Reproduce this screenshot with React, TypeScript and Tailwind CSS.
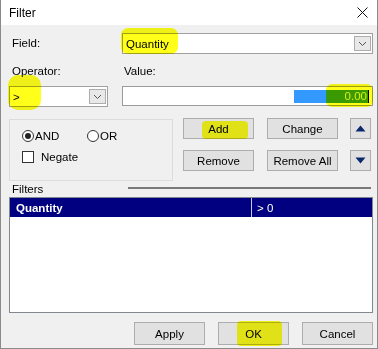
import React from 'react';

const font = { fontFamily: '"Liberation Sans", Arial, sans-serif' };

// Small chevron used in the combo boxes
const ComboArrow: React.FC = () => (
  <div className="w-[17px] h-[15px] border border-[#adadad] bg-[#e8e8e8] flex items-center justify-center">
    <svg width="9" height="6" viewBox="0 0 9 6">
      <path d="M1 1 L4.5 4.5 L8 1" fill="none" stroke="#555" strokeWidth="1" />
    </svg>
  </div>
);

const Combo: React.FC<{ value: string; width: string }> = ({ value, width }) => (
  <div className={`${width} h-[21px] bg-white border border-[#a0a0a0] flex items-center justify-between pl-[3px] pr-[1px]`}>
    <span>{value}</span>
    <ComboArrow />
  </div>
);

const WinButton: React.FC<{ label?: string; width?: string; children?: React.ReactNode }> = ({
  label,
  width = 'w-[71px]',
  children,
}) => (
  <div className={`${width} h-[21px] bg-[#e1e1e1] border border-[#adadad] flex items-center justify-center`}>
    {label ?? children}
  </div>
);

const Radio: React.FC<{ checked?: boolean; label: string }> = ({ checked, label }) => (
  <div className="flex items-center">
    <div className="w-[12px] h-[12px] rounded-full border border-[#333] bg-white flex items-center justify-center">
      {checked && <div className="w-[6px] h-[6px] rounded-full bg-[#222]" />}
    </div>
    <span className="ml-[1px]">{label}</span>
  </div>
);

export default function App() {
  return (
    <div
      className="relative w-[378px] h-[349px] bg-[#f0f0f0] border-l border-r border-b border-[#8a8a8a] text-[11.5px] leading-[14px] text-black overflow-hidden"
      style={font}
    >
      {/* Title bar */}
      <div className="h-[25px] bg-white flex items-center justify-between pl-[8px] pr-[8px]">
        <span className="text-[12px]">Filter</span>
        <svg width="11" height="11" viewBox="0 0 11 11" className="mr-[1px]">
          <path d="M0.5 0.5 L10.5 10.5 M10.5 0.5 L0.5 10.5" stroke="#111" strokeWidth="1" />
        </svg>
      </div>

      <div className="pl-[8px] flex flex-col">
        {/* Field */}
        <div className="flex items-start mt-[8px]">
          <div className="w-[113px] pl-[3px] pt-[3px]">Field:</div>
          <Combo value="Quantity" width="w-[251px]" />
        </div>

        {/* Operator / Value labels */}
        <div className="flex mt-[10px]">
          <div className="w-[113px] pl-[3px]">Operator:</div>
          <div className="pl-[2px]">Value:</div>
        </div>

        {/* Operator / Value inputs */}
        <div className="flex mt-[8px]">
          <Combo value=">" width="w-[99px]" />
          <div className="ml-[14px] w-[251px] h-[20px] bg-white border border-[#9a9a9a] flex items-center justify-end pr-[3px]">
            <div className="w-[34px] h-[13px] bg-[#3399ff]" />
            <div className="w-[40px] h-[13px] bg-[#3b9a06] flex items-center justify-end text-[#dcef5a] pr-[1px]">
              0.00
            </div>
            <div className="w-[1px] h-[13px] bg-black" />
          </div>
        </div>

        {/* Logic group + action buttons */}
        <div className="flex items-start mt-[11px]">
          <div className="w-[164px] h-[62px] mt-[1px] border border-[#dcdcdc] pl-[12px] pt-[9px]">
            <div className="flex">
              <div className="w-[65px]">
                <Radio checked label="AND" />
              </div>
              <Radio label="OR" />
            </div>
            <div className="flex items-center mt-[7px]">
              <div className="w-[12px] h-[12px] border border-[#333] bg-white" />
              <span className="ml-[7px]">Negate</span>
            </div>
          </div>
          <div className="ml-[10px] flex flex-col gap-[11px]">
            <div className="flex">
              <WinButton label="Add" />
              <div className="ml-[13px]">
                <WinButton label="Change" />
              </div>
              <div className="ml-[12px]">
                <WinButton width="w-[21px]">
                  <svg width="11" height="7" viewBox="0 0 11 7">
                    <path d="M5.5 0.5 L10.5 6.5 L0.5 6.5 Z" fill="#0b2a6e" />
                  </svg>
                </WinButton>
              </div>
            </div>
            <div className="flex">
              <WinButton label="Remove" />
              <div className="ml-[13px]">
                <WinButton label="Remove All" />
              </div>
              <div className="ml-[12px]">
                <WinButton width="w-[21px]">
                  <svg width="11" height="7" viewBox="0 0 11 7">
                    <path d="M0.5 0.5 L10.5 0.5 L5.5 6.5 Z" fill="#0b2a6e" />
                  </svg>
                </WinButton>
              </div>
            </div>
          </div>
        </div>

        {/* Filters header */}
        <div className="flex items-center h-[16px]">
          <div className="w-[119px] pl-[3px]">Filters</div>
          <div className="w-[243px] h-[2px] bg-[#7a7a7a] -mt-[3px]" />
        </div>

        {/* Filters list */}
        <div className="w-[364px] h-[116px] bg-white border border-[#828790]">
          <div className="flex h-[19px] bg-[#000080] text-white">
            <div className="w-[242px] pl-[6px] flex items-center font-bold border-r border-[#c8c8e0]">Quantity</div>
            <div className="pl-[5px] flex items-center">&gt; 0</div>
          </div>
        </div>

        {/* Dialog buttons */}
        <div className="flex mt-[9px] pl-[125px] gap-[13px]">
          <div className="h-[23px] w-[71px] bg-[#e1e1e1] border border-[#adadad] flex items-center justify-center">Apply</div>
          <div className="h-[23px] w-[71px] bg-[#e1e1e1] border border-[#adadad] flex items-center justify-center">OK</div>
          <div className="h-[23px] w-[71px] bg-[#e1e1e1] border border-[#adadad] flex items-center justify-center">Cancel</div>
        </div>
      </div>

      {/* Yellow marker highlights drawn over the dialog */}
      <div className="absolute left-[120px] top-[28px] w-[57px] h-[26px] rounded-[7px] bg-[#ffff1a] mix-blend-multiply" />
      <div className="absolute left-[7px] top-[75px] w-[33px] h-[35px] rounded-[10px] bg-[#ffff1a] mix-blend-multiply" />
      <div className="absolute left-[325px] top-[84px] w-[47px] h-[23px] rounded-[6px] bg-[#ffff1a] mix-blend-multiply" />
      <div className="absolute left-[201px] top-[121px] w-[46px] h-[18px] rounded-[4px] bg-[#ffff1a] mix-blend-multiply" />
      <div className="absolute left-[236px] top-[321px] w-[45px] h-[25px] rounded-[4px] bg-[#ffff1a] mix-blend-multiply" />
    </div>
  );
}
